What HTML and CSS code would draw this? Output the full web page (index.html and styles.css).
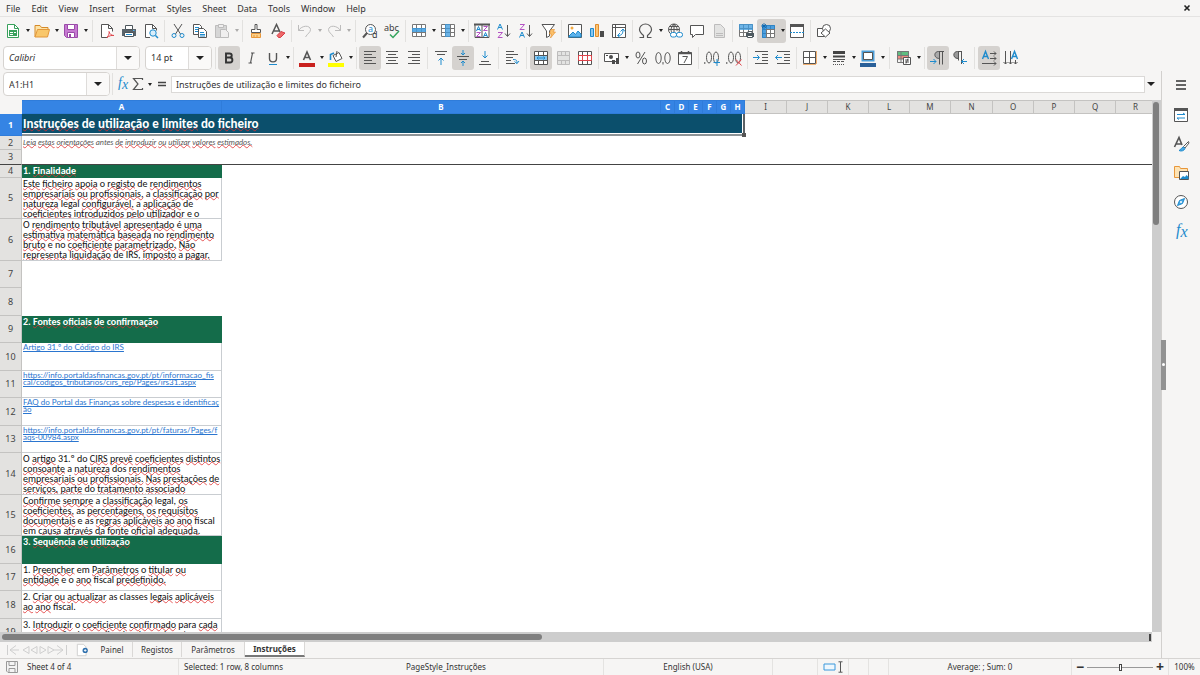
FILE: index.html
```html
<!DOCTYPE html>
<html lang="pt">
<head>
<meta charset="utf-8">
<title>Instruções</title>
<link rel="stylesheet" href="styles.css">
</head>
<body>
<div class="app">
<nav class="menubar" aria-label="Menu">
<button>File</button><button>Edit</button><button>View</button><button>Insert</button><button>Format</button><button>Styles</button><button>Sheet</button><button>Data</button><button>Tools</button><button>Window</button><button>Help</button>
<button class="close" aria-label="Close"><svg viewBox="0 0 8 8"><path d="M1.500 1.500L6.500 6.500M6.500 1.500L1.500 6.500" stroke="#222" stroke-width="1.600"/></svg></button>
</nav>

<div class="toolbar" role="toolbar" aria-label="Standard">
<button class="tb" aria-label="New"><svg viewBox="0 0 16 16"><path class="g" d="M2.500 1.500h7l4 4v9h-11z" fill="#fff"/><path class="g" d="M9.500 1.500v4h4"/><path d="M4 7h8v6H4z" fill="#37a15b"/><path d="M5 9h3v1H5zM9 9h2v1H9zM5 11h3v1H5z" fill="#fff"/></svg></button><button class="dd" aria-label="New options"></button>
<button class="tb" aria-label="Open"><svg viewBox="0 0 16 16"><path d="M1 14V2.500h5l1.500 2H14V7" fill="#fde3a5" stroke="#d68a29"/><path d="M1 14L3.500 6.500h12L13.500 14z" fill="#f9c76b" stroke="#e2973b"/></svg></button><button class="dd" aria-label="Open options"></button>
<button class="tb" aria-label="Save"><svg viewBox="0 0 16 16"><path d="M1.500 1.500h13v13h-11l-2-2z" fill="#c679d1" stroke="#9a4aa8"/><path d="M4.500 1.500h7v5h-7zM4.500 9.500h7v5h-7z" fill="#fff" stroke="#9a4aa8"/><path d="M6 11h2v3H6z" fill="#9a4aa8"/></svg></button><button class="dd" aria-label="Save options"></button>
<i class="sep wide"></i>
<button class="tb" aria-label="Export PDF"><svg viewBox="0 0 16 16"><path class="k" d="M8.500 14.500h-6v-13h7l4 4v3" fill="#fff"/><path class="k" d="M9.500 1.500v4h4"/><path d="M8 14.500C10 12 10.500 10 10 8.500c1 3 2.500 4 5 4-2.500-.5-5 .5-7 2z" class="r"/></svg></button>
<button class="tb" aria-label="Print"><svg viewBox="0 0 16 16"><path d="M1 6h14v7H1z" fill="#59636a"/><path d="M4.500 2.500h7v4h-7zM3.500 9.500h9v4h-9z" fill="#fff" stroke="#4c555b"/><path d="M5 11.500h6" class="b"/><path d="M12 7.500h1.500" stroke="#4ab0ee"/></svg></button>
<button class="tb" aria-label="Print preview"><svg viewBox="0 0 16 16"><path class="k" d="M7 14.500H2.500v-13h7l4 4v2" fill="#fff"/><path class="k" d="M9.500 1.500v4h4"/><circle cx="10" cy="10" r="3.200" fill="#d9eefb" class="b"/><path class="b" d="M12.500 12.500l2.500 2.500" stroke-width="1.500"/></svg></button>
<i class="sep"></i>
<button class="tb" aria-label="Cut"><svg viewBox="0 0 16 16"><path class="k" d="M4 1l6.500 10M12 1L5.500 11"/><circle class="b" cx="4" cy="12.500" r="2"/><circle class="b" cx="12" cy="12.500" r="2"/></svg></button>
<button class="tb" aria-label="Copy"><svg viewBox="0 0 16 16"><path class="k" d="M1.500 1.500h6l2 2v8h-8z" fill="#fff"/><path class="b" d="M3 4.500h4M3 6.500h3M3 8.500h3"/><path class="k" d="M6.500 5.500h5l3 3v6h-8z" fill="#fff"/><path class="b" d="M8 9.500h4M8 11.500h5M8 13h5"/></svg></button>
<button class="tb off" aria-label="Paste"><svg viewBox="0 0 16 16"><path d="M1.500 2.500h11v12h-11z" fill="#ccc" stroke="#aaa"/><path d="M4.500 1.500h5v3h-5z" fill="#eee" stroke="#aaa"/><path d="M6.500 6.500h5l3 3v5h-8z" fill="#eee" stroke="#aaa"/></svg></button><button class="dd off" aria-label="Paste options"></button>
<i class="sep"></i>
<button class="tb" aria-label="Clone formatting"><svg viewBox="0 0 16 16"><path class="k" d="M7 1.500h2v5h3.500v3h-9v-3H7z" fill="#fff"/><path d="M3.500 10.500h9v4h-9z" fill="#fbd08a" stroke="#e8973a"/><path d="M6 12v2M9 12v2" stroke="#e8973a"/></svg></button>
<button class="tb" aria-label="Clear formatting"><svg viewBox="0 0 16 16"><path class="k" d="M2 11L6.500 1.500 10 9M4 8h5" stroke-width="1.500"/><path d="M7 12.500l4-4 4 1.500-4.500 4.500h-2z" fill="#ed6a6a" stroke="#d83b45"/></svg></button>
<i class="sep"></i>
<button class="tb off" aria-label="Undo"><svg viewBox="0 0 16 16"><path d="M1.500 2v5.500H7M1.500 7.500C5 2 13 2 13.500 6.500c0 3-3 4-5 7.500" class="m"/></svg></button><button class="dd off" aria-label="Undo options"></button>
<button class="tb off" aria-label="Redo"><svg viewBox="0 0 16 16"><path d="M14.500 2v5.500H9M14.500 7.500C11 2 3 2 2.500 6.500c0 3 3 4 5 7.500" class="m"/></svg></button><button class="dd off" aria-label="Redo options"></button>
<i class="sep wide"></i>
<button class="tb" aria-label="Find and replace"><svg viewBox="0 0 16 16"><circle class="k" cx="8.500" cy="6.500" r="5" fill="#fff"/><path class="k" d="M5 10l-4 4.500" stroke-width="2"/><text x="6" y="9" class="t9 fb">a</text><text x="10" y="15" class="t9 fk">d</text></svg></button>
<button class="tb" aria-label="Spelling"><svg viewBox="0 0 16 16"><text x="0" y="8" class="t9 fk">abc</text><path d="M6 11.500l3 3 6-6.500" fill="none" stroke="#35a55e" stroke-width="1.500"/></svg></button>
<i class="sep"></i>
<button class="tb" aria-label="Row"><svg viewBox="0 0 16 16"><path d="M1 1h14v13H1z" fill="#fff"/><path class="l" d="M1.500 1.500h13v12h-13zM1.500 5.500h13M1.500 9.500h13M5.500 1.500v12M10.500 1.500v12"/><path d="M1 5h14v4H1z" fill="#3c9bdf" opacity=".85"/></svg></button><button class="dd" aria-label="Row options"></button>
<button class="tb" aria-label="Column"><svg viewBox="0 0 16 16"><path d="M1 1h14v13H1z" fill="#fff"/><path class="l" d="M1.500 1.500h13v12h-13zM1.500 5.500h13M1.500 9.500h13M5.500 1.500v12M10.500 1.500v12"/><path d="M5 1h5v13H5z" fill="#3c9bdf" opacity=".75"/></svg></button><button class="dd" aria-label="Column options"></button>
<i class="sep"></i>
<button class="tb" aria-label="Sort"><svg viewBox="0 0 16 16"><path class="k" d="M1 1.500h14v13H1zM8 2v12" fill="#fff"/><path class="k" d="M0 1.500h16" stroke-width="2"/><path class="b" d="M2.500 8L4.500 3.500 6.500 8M3 6.500h3M9.500 14l2-4.500 2 4.500M10 12.500h3"/><path class="p" d="M2.500 9.500h4l-4 4h4M9.500 3.500h4l-4 4h4"/></svg></button>
<button class="tb" aria-label="Sort ascending"><svg viewBox="0 0 16 16"><path class="b" d="M1.500 6.500L4 1l2.500 5.500M2.500 4.500h3"/><path class="p" d="M2 9.500h4.500L2 14.500h4.500"/><path class="k" d="M11.500 2v11M9 10.500l2.500 3 2.500-3"/></svg></button>
<button class="tb" aria-label="Sort descending"><svg viewBox="0 0 16 16"><path class="p" d="M2 1.500h4.500L2 6.500h4.500"/><path class="b" d="M1.500 14.500L4 9l2.500 5.500M2.500 12.500h3"/><path class="k" d="M11.500 2v11M9 10.500l2.500 3 2.500-3"/></svg></button>
<button class="tb" aria-label="AutoFilter"><svg viewBox="0 0 16 16"><path class="k" d="M2 1.500h12.500L9.500 8v5l-3 1.500V8z" fill="#fff"/><path d="M11 6.500h3.500L13 9h2.500l-5 6 1-4H9.500z" fill="#fbc16b" stroke="#e8973a" stroke-width=".7"/></svg></button>
<i class="sep"></i>
<button class="tb" aria-label="Image"><svg viewBox="0 0 16 16"><path class="k" d="M1.500 1.500h13v13h-13z" fill="#fff"/><path d="M2 13l4-4 2.500 2.500L11 8l3 3v3H2z" fill="#5db3ed" stroke="#1e8bcd"/><circle cx="5" cy="5" r="1.500" fill="#f3aa43"/></svg></button>
<button class="tb" aria-label="Chart"><svg viewBox="0 0 16 16"><path d="M1.500 5.500h3v8h-3z" fill="#8ac6ef" stroke="#1e8bcd"/><path d="M6.500 1.500h3v12h-3z" fill="#fac577" stroke="#e18c2b"/><path d="M11 8h4v6h-4z" fill="#4b4b4b"/></svg></button>
<button class="tb" aria-label="Pivot table"><svg viewBox="0 0 16 16"><path class="k" d="M1.500 1.500h13v13h-13zM1.500 4.500h13M4.500 1.500v13" fill="#fff"/><path class="b" d="M7 12.500c4 0 5-2 5-6M9.500 8.500L12 6l2 2.500M9 10l-2.500 2.500L9 14.500"/></svg></button>
<i class="sep"></i>
<button class="tb" aria-label="Special character"><svg viewBox="0 0 16 16"><path class="k" d="M1.500 14.500h4v-2C2.500 10 1.500 8.500 1.500 6.500a6 5.500 0 0 1 12 0c0 2-1 3.500-4 6v2h4" stroke-width="1.200"/></svg></button><button class="dd" aria-label="Special character options"></button>
<button class="tb" aria-label="Hyperlink"><svg viewBox="0 0 16 16"><circle class="k" cx="7" cy="6.500" r="5.500"/><path class="k" d="M1.500 6.500h11M7 1v9M3 3.500h8M7 1c-4 4-3 7-2 9M7 1c4 4 3 6 3 7"/><rect x="3.500" y="9.500" width="6" height="4.500" rx="2" fill="#fff" class="b"/><rect x="9.500" y="9.500" width="6" height="4.500" rx="2" fill="#fff" class="b"/></svg></button>
<button class="tb" aria-label="Comment"><svg viewBox="0 0 16 16"><path class="k" d="M1.500 2.500h13v9h-8l-3 3v-3h-2z" fill="#fff"/></svg></button>
<button class="tb off" aria-label="Headers and footers"><svg viewBox="0 0 16 16"><path d="M3.500 1.500h6l4 4v9h-10z" fill="#ddd" stroke="#aaa"/><path d="M5 10.500h7M5 12.500h7" stroke="#aaa"/></svg></button>
<i class="sep"></i>
<button class="tb" aria-label="Print area"><svg viewBox="0 0 16 16"><path d="M1 1h14v13H1z" fill="#fff"/><path class="l" d="M1.500 1.500h13v12h-13zM1.500 5.500h13M1.500 9.500h13M5.500 1.500v12M10.500 1.500v12"/><path d="M1 1h14v6H1z" fill="#3c9bdf" opacity=".75"/><path d="M8 10h8v4H8z" fill="#4d5960"/><path d="M10 8.500h4v2h-4zM9.500 12.500h5v2h-5z" fill="#fff" stroke="#4d5960"/></svg></button>
<span class="split"><button class="tb" aria-label="Freeze"><svg viewBox="0 0 16 16"><path d="M2 2h13v13H2z" fill="#fff"/><path class="l" d="M2.500 2.500h12v12h-12zM6.500 3v11M10.500 3v11M2.500 6.500h12M2.500 10.500h12"/><path d="M2 2h13v4H6v9H2z" fill="#1e86d6" opacity=".8"/><path d="M4 0v6M1 3h6M2 1l4 4M6 1L2 5" stroke="#0b65ac" stroke-width=".8"/></svg></button><button class="dd" aria-label="Freeze options"></button></span>
<button class="tb" aria-label="Split window"><svg viewBox="0 0 16 16"><path class="k" d="M1.500 1.500h13v13h-13z" fill="#fff"/><path d="M1 1h14v3H1z" fill="#555"/><path class="b" d="M1 9.500h14" stroke-dasharray="2 1"/></svg></button>
<i class="sep"></i>
<button class="tb" aria-label="Draw functions"><svg viewBox="0 0 16 16"><path class="k" d="M1.500 5.500h7v8h-7z" fill="#fff"/><circle cx="10.500" cy="5.500" r="4" fill="#fff" class="k"/><path class="k" d="M9.500 6l4.500 4-4.500 4L5 10z" fill="#fff"/></svg></button>
</div>

<div class="toolbar format" role="toolbar" aria-label="Formatting">
<div class="combo font"><input class="it" aria-label="Font name" value="Calibri"><button aria-label="Font list"></button></div>
<div class="combo size"><input aria-label="Font size" value="14 pt"><button aria-label="Size list"></button></div>
<i class="sep"></i>
<button class="tb on" aria-label="Bold"><svg viewBox="0 0 16 16"><path d="M5 3.500h3.500c3 0 3 4 0 4H5zM5 7.500h4c3.200 0 3.200 5 0 5H5z" fill="none" stroke="#333" stroke-width="1.900"/></svg></button>
<button class="tb" aria-label="Italic"><svg viewBox="0 0 16 16"><path class="k" d="M9.500 3L7.500 13M8 3h3.500M5.500 13H9" stroke-width="1.200"/></svg></button>
<button class="tb" aria-label="Underline"><svg viewBox="0 0 16 16"><path class="k" d="M4.500 3v5.500c0 4.500 7 4.500 7 0V3" stroke-width="1.400"/><path class="b" d="M4 14.500h8"/></svg></button><button class="dd" aria-label="Underline options"></button>
<i class="sep"></i>
<button class="tb" aria-label="Font colour"><svg viewBox="0 0 16 16"><path class="k" d="M4.500 10L8 2l3.500 8M6 7.500h4.500" stroke-width="1.600"/><path d="M0 13h16v4H0z" fill="#c9211e"/></svg></button><button class="dd" aria-label="Font colour options"></button>
<button class="tb" aria-label="Highlighting"><svg viewBox="0 0 16 16"><path class="k" d="M5 5.500l6-3 3 6-6 3zM8 7l1-6" fill="#fff"/><path d="M2.500 10V4.500L6 3" fill="none" stroke="#1e8bcd" stroke-width="1.600"/><path d="M0 13h16v4H0z" fill="#ff0"/></svg></button><button class="dd" aria-label="Highlighting options"></button>
<i class="sep"></i>
<button class="tb on" aria-label="Align left"><svg viewBox="0 0 16 16"><path class="k" d="M2 1.500h12M2 4.500h8M2 7.500h12M2 10.500h8M2 13.500h12"/></svg></button>
<button class="tb" aria-label="Align centre"><svg viewBox="0 0 16 16"><path class="k" d="M2 1.500h12M4 4.500h8M2 7.500h12M4 10.500h8M2 13.500h12"/></svg></button>
<button class="tb" aria-label="Align right"><svg viewBox="0 0 16 16"><path class="k" d="M2 1.500h12M6 4.500h8M2 7.500h12M6 10.500h8M2 13.500h12"/></svg></button>
<i class="sep"></i>
<button class="tb" aria-label="Align top"><svg viewBox="0 0 16 16"><path class="k" d="M2 1.500h12M4 4.500h8"/><path class="b" d="M8 15V8M5.500 10.500L8 8l2.500 2.500"/></svg></button>
<button class="tb on" aria-label="Centre vertically"><svg viewBox="0 0 16 16"><path class="k" d="M2 6.500h12M4 9.500h8"/><path class="b" d="M8 0v5M6 3l2 2 2-2M8 16v-5M6 13l2-2 2 2"/></svg></button>
<button class="tb" aria-label="Align bottom"><svg viewBox="0 0 16 16"><path class="k" d="M2 14.500h12M4 11.500h8"/><path class="b" d="M8 1v7M5.500 5.500L8 8l2.500-2.500"/></svg></button>
<i class="sep"></i>
<button class="tb" aria-label="Wrap text"><svg viewBox="0 0 16 16"><path class="k" d="M2 1.500h8M2 4.500h12M2 7.500h7M2 10.500h5M2 13.500h9"/><path class="b" d="M9 9.500c4 0 4 1 4 4M10.500 11.500l2.500 2 2-2.500"/></svg></button>
<i class="sep wide"></i>
<button class="tb on" aria-label="Merge and centre"><svg viewBox="0 0 16 16"><path class="k" d="M1.500 1.500h13v13h-13zM1.500 5.500h13M1.500 10.500h13M5.500 1.500v4M10.500 1.500v4M5.500 10.500v4M10.500 10.500v4" fill="#fff"/><path d="M2 6h12v4H2z" fill="#86c7f3"/><path class="b" d="M4 8h8M5.500 6.500L4 8l1.500 1.500M10.500 6.500L12 8l-1.500 1.500"/></svg></button>
<button class="tb off" aria-label="Merge cells"><svg viewBox="0 0 16 16"><path d="M2.500 1.500h12v13h-12zM2.500 5.500h12M2.500 10.500h12M6.500 1.500v4M10.500 1.500v4M6.500 10.500v4M10.500 10.500v4" fill="#ddd" stroke="#aaa"/></svg></button>
<button class="tb" aria-label="Unmerge cells"><svg viewBox="0 0 16 16"><path class="k" d="M1.500 1.500h13v13h-13zM5.500 1.500v4M10.500 1.500v4M5.500 10.500v4M10.500 10.500v4" fill="#fff"/><path class="r" d="M1.500 5.500h13v5h-13zM5.500 5.500v5M10.500 5.500v5"/></svg></button>
<i class="sep"></i>
<button class="tb" aria-label="Currency"><svg viewBox="0 0 16 16"><path class="k" d="M.5 3.500h14v8H.5z" fill="#fff"/><circle cx="7" cy="7" r="2" fill="#4b4b4b"/><path d="M2 5h2v1H2zM8 10h3v4H8zM12 8h3v6h-3z" fill="#4b4b4b"/></svg></button><button class="dd" aria-label="Currency options"></button>
<button class="tb" aria-label="Percent"><svg viewBox="0 0 16 16"><ellipse class="k" cx="5" cy="5" rx="2" ry="3"/><ellipse class="k" cx="11.500" cy="11" rx="2" ry="3"/><path class="k" d="M12 2L4.500 14"/></svg></button>
<button class="tb" aria-label="Number"><svg viewBox="0 0 16 16"><ellipse class="k" cx="3.500" cy="8" rx="2.700" ry="5.500"/><ellipse class="k" cx="12.500" cy="8" rx="2.700" ry="5.500"/><path class="k" d="M8 12v2.500"/></svg></button>
<button class="tb" aria-label="Date"><svg viewBox="0 0 16 16"><path class="k" d="M1.500 2.500h13v12h-13z" fill="#fff"/><path class="k" d="M1 3.500h14M4.500 1v3M11.500 1v3" stroke-width="1.500"/><path class="k" d="M5.500 6.500h5L7 13"/></svg></button>
<i class="sep"></i>
<button class="tb" aria-label="Add decimal place"><svg viewBox="0 0 16 16"><path class="k" d="M.8 12v2"/><ellipse class="k" cx="5" cy="7.500" rx="2.500" ry="5.500"/><ellipse class="k" cx="12" cy="7.500" rx="2.500" ry="5.500"/><path class="b" d="M13 9v7M9.500 12.500h6.500"/></svg></button>
<button class="tb" aria-label="Delete decimal place"><svg viewBox="0 0 16 16"><path class="k" d="M.8 12v2"/><ellipse class="k" cx="5" cy="7.500" rx="2.500" ry="5.500"/><ellipse class="k" cx="12" cy="7.500" rx="2.500" ry="5.500"/><path class="r" d="M10 9.500l5.500 6M15.500 9.500l-5.500 6"/></svg></button>
<i class="sep"></i>
<button class="tb" aria-label="Increase indent"><svg viewBox="0 0 16 16"><path class="k" d="M2 1.500h13M9 4.500h6M9 7.500h6M9 10.500h6M2 13.500h13"/><path class="b" d="M0 7.500h6M4 5l2.500 2.500L4 10"/></svg></button>
<button class="tb" aria-label="Decrease indent"><svg viewBox="0 0 16 16"><path class="k" d="M2 1.500h13M9 4.500h6M9 7.500h6M9 10.500h6M2 13.500h13"/><path class="b" d="M7 7.500H.5M3 5L.5 7.500 3 10"/></svg></button>
<i class="sep"></i>
<button class="tb" aria-label="Borders"><svg viewBox="0 0 16 16"><path class="k" d="M1.500 1.500h12v12h-12zM7.500 1.500v12M1.500 7.500h12" fill="#fff"/><path d="M1 14.500h13M14.500 1v13" stroke="#f1b070"/></svg></button><button class="dd" aria-label="Borders options"></button>
<button class="tb" aria-label="Border style"><svg viewBox="0 0 16 16"><path d="M2 2.500h12" stroke="#444" stroke-width="3"/><path d="M2 6.500h12" stroke="#444" stroke-width="2"/><path class="k" d="M2 9.500h12"/><path class="k" d="M2 11.500h12" stroke-dasharray="3 1"/><path class="k" d="M2 14.500h12" stroke-dasharray="1 1"/></svg></button><button class="dd" aria-label="Border style options"></button>
<button class="tb" aria-label="Border colour"><svg viewBox="0 0 16 16"><path d="M2.500 1.500h11v9h-11z" fill="#fff" stroke="#4c9fda" stroke-width="2"/><path d="M3.500 2.500h9v7h-9z" class="k"/><path d="M0 13h16v4H0z" fill="#2a6099"/></svg></button><button class="dd" aria-label="Border colour options"></button>
<i class="sep wide"></i>
<button class="tb" aria-label="Conditional formatting"><svg viewBox="0 0 16 16"><path d="M1 1h12v4H1z" fill="#60bd80"/><path d="M1 5h12v4H1z" fill="#f08b80"/><path class="l" d="M1.500 1.500h11v11h-11zM1.500 5.500h11M1.500 9h11M5 1.500v11"/><path class="k" d="M7.500 7.500h7v7h-7z" fill="#fff"/><path class="k" d="M9 10h4M9 12h4M12 8.500l-2 5"/></svg></button><button class="dd" aria-label="Conditional options"></button>
<i class="sep"></i>
<button class="tb on" aria-label="Left to right"><svg viewBox="0 0 16 16"><path d="M9 1.500C3.500 1 3.500 9 9 8.500z" fill="#aaa"/><path class="k" d="M14 1.500H8.500C3.500 1.500 3.500 8.500 9.500 8.500M9.500 1.500v13M12.500 1.500v13"/><path class="b" d="M0 11.500h6M3.500 9L6 11.500 3.500 14"/></svg></button>
<button class="tb" aria-label="Right to left"><svg viewBox="0 0 16 16"><path d="M6 1.500C.5 1 .5 9 6 8.500z" fill="#999"/><path class="k" d="M10 1.500H5.500C.5 1.500.5 8.500 6 8.500M6.500 1.500v9M9.500 1.500V14"/><path class="b" d="M15 11.500H9.500M12 9l-2.500 2.500L12 14"/></svg></button>
<i class="sep wide"></i>
<button class="tb on" aria-label="Horizontal text"><svg viewBox="0 0 16 16"><path class="b" d="M1.500 9L4.500 1.500 7.500 9M2.500 6.500h4" stroke-width="1.400"/><path class="k" d="M9 3.500h6M13 1.500l2 2-2 2M9 8.500h6M13 6.500l2 2-2 2M1 13.500h14M13 11.500l2 2-2 2"/></svg></button>
<button class="tb" aria-label="Vertical text"><svg viewBox="0 0 16 16"><path class="b" d="M8.500 9l3-7.500 3 7.500M9.500 6.500h4" stroke-width="1.400"/><path class="k" d="M2.500 1v13M.5 12l2 2 2-2M7.500 1v13M5.500 12l2 2 2-2M12.500 10v4M10.500 12l2 2 2-2"/></svg></button>
</div>

<div class="work">
<main class="sheet">
<div class="formula">
<div class="combo name"><input aria-label="Name box" value="A1:H1"><button aria-label="Names"></button></div>
<i class="sep"></i>
<button class="fb16" aria-label="Function wizard"><svg viewBox="0 0 16 16"><text x="3" y="11" class="fx">f<tspan dy="2">x</tspan></text></svg></button>
<button class="fb16 sum" aria-label="Sum"><svg viewBox="0 0 16 16"><path class="k" d="M12.500 4V2.500h-9L8 8l-4.500 5.500h9V12" stroke-width="1.200"/></svg></button><button class="dd" aria-label="Function options"></button>
<button class="fb16 eq" aria-label="Formula"><svg viewBox="0 0 16 16"><path d="M3 6.500h8M3 9.500h8" stroke="#444" stroke-width="1.400"/></svg></button>
<input class="line" aria-label="Input line" value="Instruções de utilização e limites do ficheiro">
<button class="dd big" aria-label="Expand"></button>
</div>
<div class="gridwrap">
<div class="grid">
<table>
<colgroup><col class="ch"><col class="ca"><col class="cb"><col class="cs"><col class="cs"><col class="cs"><col class="cs"><col class="cs"><col class="cs"><col class="cw"><col class="cn"><col class="cn"><col class="cn"><col class="cn"><col class="cw"><col class="cn"><col class="cn"><col class="cn"><col></colgroup>
<thead><tr><th class="corner"></th><th class="sel">A</th><th class="sel">B</th><th class="sel">C</th><th class="sel">D</th><th class="sel">E</th><th class="sel">F</th><th class="sel">G</th><th class="sel">H</th><th>I</th><th>J</th><th>K</th><th>L</th><th>M</th><th>N</th><th>O</th><th>P</th><th>Q</th><th>R</th></tr></thead>
<tbody>
<tr class="h22"><th class="sel">1</th><td colspan="8" class="title"><div><s>Instruções</s> de <s>utilização</s> e <s>limites</s> do <s>ficheiro</s></div><span class="handle"></span></td><td colspan="10"></td></tr>
<tr class="h14"><th>2</th><td colspan="18" class="note"><div><s>Leia</s> <s>estas</s> <s>orientações</s> antes <s>de</s> <s>introduzir</s> <s>ou</s> <s>utilizar</s> <s>valores</s> <s>estimados.</s></div></td></tr>
<tr class="h15 frozen"><th>3</th><td colspan="18"></td></tr>
<tr class="h13"><th>4</th><td class="head"><div>1. <s>Finalidade</s></div></td><td colspan="17"></td></tr>
<tr class="h41"><th>5</th><td class="cell"><div><s>Este</s> <s>ficheiro</s> <s>apoia</s> o <s>registo</s> de <s>rendimentos</s><br><s>empresariais</s> <s>ou</s> <s>profissionais,</s> a <s>classificação</s> <s>por</s><br><s>natureza</s> legal <s>configurável,</s> a <s>aplicação</s> de<br><s>coeficientes</s> <s>introduzidos</s> <s>pelo</s> <s>utilizador</s> e o</div></td><td colspan="17"></td></tr>
<tr class="h42"><th>6</th><td class="cell"><div>O <s>rendimento</s> <s>tributável</s> <s>apresentado</s> é <s>uma</s><br><s>estimativa</s> <s>matemática</s> <s>baseada</s> no <s>rendimento</s><br><s>bruto</s> e no <s>coeficiente</s> <s>parametrizado.</s> <s>Não</s><br><s>representa</s> <s>liquidação</s> de IRS, <s>imposto</s> a <s>pagar,</s></div></td><td colspan="17"></td></tr>
<tr class="h27"><th>7</th><td colspan="18"></td></tr>
<tr class="h28"><th>8</th><td colspan="18"></td></tr>
<tr class="h27"><th>9</th><td class="head"><div>2. <s>Fontes</s> <s>oficiais</s> <s>de</s> <s>confirmação</s></div></td><td colspan="17"></td></tr>
<tr class="h28"><th>10</th><td class="cell link"><div><a href="#irs">Artigo 31.º do Código do IRS</a></div></td><td colspan="17"></td></tr>
<tr class="h27"><th>11</th><td class="cell link"><div><a href="#irs31">https://info.portaldasfinancas.gov.pt/pt/informacao_fis<br>cal/codigos_tributarios/cirs_rep/Pages/irs31.aspx</a></div></td><td colspan="17"></td></tr>
<tr class="h28"><th>12</th><td class="cell link"><div><a href="#faq">FAQ do Portal das Finanças sobre despesas e identificaç<br>ão</a></div></td><td colspan="17"></td></tr>
<tr class="h27"><th>13</th><td class="cell link"><div><a href="#faqs">https://info.portaldasfinancas.gov.pt/pt/faturas/Pages/f<br>aqs-00984.aspx</a></div></td><td colspan="17"></td></tr>
<tr class="h42"><th>14</th><td class="cell"><div>O <s>artigo</s> 31.º do <s>CIRS</s> <s>prevê</s> <s>coeficientes</s> <s>distintos</s><br><s>consoante</s> a <s>natureza</s> dos <s>rendimentos</s><br><s>empresariais</s> <s>ou</s> <s>profissionais.</s> <s>Nas</s> <s>prestações</s> <s>de</s><br><s>serviços,</s> <s>parte</s> do <s>tratamento</s> <s>associado</s></div></td><td colspan="17"></td></tr>
<tr class="h41"><th>15</th><td class="cell"><div><s>Confirme</s> <s>sempre</s> a <s>classificação</s> legal, <s>os</s><br><s>coeficientes,</s> as <s>percentagens,</s> <s>os</s> <s>requisitos</s><br><s>documentais</s> e as <s>regras</s> <s>aplicáveis</s> <s>ao</s> <s>ano</s> fiscal<br>em <s>causa</s> <s>através</s> <s>da</s> <s>fonte</s> <s>oficial</s> <s>adequada.</s></div></td><td colspan="17"></td></tr>
<tr class="h28"><th>16</th><td class="head"><div>3. <s>Sequência</s> <s>de</s> <s>utilização</s></div></td><td colspan="17"></td></tr>
<tr class="h27"><th>17</th><td class="cell"><div>1. <s>Preencher</s> em <s>Parâmetros</s> o <s>titular</s> <s>ou</s><br><s>entidade</s> e o <s>ano</s> fiscal <s>predefinido.</s></div></td><td colspan="17"></td></tr>
<tr class="h28"><th>18</th><td class="cell"><div>2. <s>Criar</s> <s>ou</s> <s>actualizar</s> as classes <s>legais</s> <s>aplicáveis</s><br><s>ao</s> <s>ano</s> fiscal.</div></td><td colspan="17"></td></tr>
<tr class="h27"><th>19</th><td class="cell"><div>3. <s>Introduzir</s> o <s>coeficiente</s> <s>confirmado</s> para <s>cada</s><br><s>combinação</s> de <s>ano</s> fiscal e <s>classe</s> de <s>natureza.</s></div></td><td colspan="17"></td></tr>
</tbody>
</table>
</div>
<div class="vscroll"><div class="vthumb"></div></div>
</div>
<div class="hscroll"><div class="hthumb"></div><i class="hend"></i></div>
<div class="tabs">
<svg class="navs" viewBox="0 0 62 12"><path d="M1.500 1v10M10 1.500L4 6l6 4.500M4 6h9M23 2.500L17 6l6 3.500zM31 2.500L25 6l6 3.500zM34 2.500L40 6l-6 3.500zM42 2.500L48 6l-6 3.500zM51 1.500L57 6l-6 4.500M48 6h9M60.500 1v10" fill="none" stroke="#cfcfcf"/></svg>
<button class="add" aria-label="Add sheet"><svg viewBox="0 0 16 16"><path d="M1.500 1.500h7l3 3v10h-10z" fill="#fff" stroke="#ccc"/><circle cx="10.500" cy="8.500" r="3" fill="#2d6fad"/><path d="M9 8.500h3M10.500 7v3" stroke="#fff"/></svg></button>
<button class="tab t1">Painel</button><button class="tab t2">Registos</button><button class="tab t3">Parâmetros</button><button class="tab cur">Instruções</button>
</div>
</main>
<aside class="side">
<span class="grip"></span>
<button aria-label="Settings"><svg viewBox="0 0 16 16"><path d="M3 4h10M3 8h10M3 12h10" stroke="#333" stroke-width="1.500"/></svg></button>
<button aria-label="Properties"><svg viewBox="0 0 16 16"><path class="k" d="M1.500 2.500h13v12h-13z" fill="#fff"/><path d="M1 1h14v3H1z" fill="#555"/><path class="b" d="M4 7.500h8M10 6l2 1.500M12 11H4M6 12.500L4 11"/></svg></button>
<button aria-label="Styles"><svg viewBox="0 0 16 16"><path class="k" d="M1.500 11L6 1.500 9 9M3 8h5.500" stroke-width="1.600"/><path class="k" d="M15.500 5.500l-5 5 1.500 1.500 4-5z" fill="#fff"/><path d="M10.500 11l1.500 1.500C11 15 8 15.500 6 14.500c2-.5 2-3 4.500-3.500z" fill="#4ba8e4" stroke="#1e8bcd"/></svg></button>
<button aria-label="Gallery"><svg viewBox="0 0 16 16"><path d="M1.500 12.500v-11h5l1 2h7v9z" fill="#fde3b5" stroke="#e8973a"/><path d="M6.500 6.500h9v8h-9z" fill="#fff" class="k"/><path d="M7 14l3-3 2 1 1.500-2 2 2v2z" fill="#1e8bcd"/></svg></button>
<button aria-label="Navigator"><svg viewBox="0 0 16 16"><circle cx="8" cy="8" r="6.500" fill="#fff" class="k"/><path d="M11.500 4.500L9.500 9.500l-5 2 2-5z" fill="#4ba8e4" class="b"/><circle cx="8" cy="8" r="1" fill="#fff"/></svg></button>
<button aria-label="Functions"><svg viewBox="0 0 16 16"><text x="3" y="12" class="fx fxl">f<tspan dy="2">x</tspan></text></svg></button>
</aside>
</div>

<footer class="status">
<span class="s0"><svg viewBox="0 0 12 12"><path d="M.5 .5h11v11H2l-1.500-1.500zM3 .5h6v4H3zM3 7.500h6v4H3z" fill="#f4f4f4" stroke="#999"/></svg>Sheet 4 of 4</span>
<span class="s1">Selected: 1 row, 8 columns</span>
<span class="s2">PageStyle_Instruções</span>
<span class="s3">English (USA)</span>
<span class="s4"></span>
<span class="s5"><svg viewBox="0 0 20 12"><path d="M1 3h11v6H1z" fill="#eef7fd" stroke="#3b98dc"/><path class="k" d="M17.500 1v10M15.500 .8h4M15.500 11.200h4"/></svg></span>
<span class="s6"></span><span class="s6"></span>
<span class="s7">Average: ; Sum: 0</span>
<span class="s8"><button aria-label="Zoom out">−</button><input type="range" aria-label="Zoom" min="0" max="100" value="50"><button aria-label="Zoom in">+</button></span>
<span class="s9">100%</span>
</footer>
</div>
</body>
</html>
```
FILE: styles.css
```css
* { box-sizing: border-box; }
body { margin: 0; font-family: "Noto Sans", sans-serif; font-size: 9px; color: #333; background: #f6f5f4; }
button { font: inherit; color: inherit; border: 0; background: none; padding: 0; margin: 0; }
input { font: inherit; color: inherit; border: 0; min-width: 0; margin: 0; }
.app { display: flex; flex-direction: column; height: 100vh; overflow: hidden; }

.menubar { display: flex; flex: none; align-items: center; gap: 11px; height: 17px; padding: 0 5px 0 6px; border-bottom: 1px solid #e4e3e2; }
.close { margin-left: auto; width: 12px; height: 12px; }
.close svg { width: 8px; height: 8px; }

.toolbar { display: flex; flex: none; align-items: center; height: 27px; padding-left: 2px; }
.toolbar.format { padding-left: 3px; }
.tb { display: flex; align-items: center; justify-content: center; flex: none; width: 22px; height: 24px; border-radius: 3px; }
.tb svg { width: 16px; height: 16px; overflow: visible; }
.on, .split { background: #d5d2cf; }
.split { display: flex; border-radius: 3px; align-items: center; }
.off { opacity: .75; }
.dd { flex: none; width: 7px; height: 24px; display: flex; align-items: center; justify-content: center; }
.dd::before, .combo button::before { content: ""; border: 2px solid transparent; border-top: 3px solid #222; border-bottom: 0; }
.dd.off { opacity: .35; }
.dd.big::before, .combo button::before { border-width: 4px 4px 0; }
.sep { flex: none; width: 1px; height: 22px; margin: 0 2px; background: #e2e1df; }
.sep.wide { margin: 0 3px; }

svg { display: block; }
.k { stroke: #555; }
.l { stroke: #777; }
.b { stroke: #1e8bcd; }
.p { stroke: #b453c4; }
.r { stroke: #e0454c; }
.g { stroke: #37a15b; }
.m { stroke: #aaa; }
path.k:not([fill]), path.b:not([fill]), path.p, path.r, path.m, path.l, path.g:not([fill]), circle:not([fill]), ellipse { fill: none; }
.t9 { font-size: 9px; font-family: "Noto Sans", sans-serif; }
.fb { fill: #1e8bcd; }
.fk { fill: #3c3c3c; }
.fx { font: italic 14px "Liberation Serif", serif; fill: #1e8bcd; }
.fxl { font-size: 16px; }

.combo { display: flex; flex: none; height: 24px; background: #fff; border: 1px solid #d6d3d0; border-radius: 4px; overflow: hidden; }
.combo input { flex: 1; padding: 0 5px; background: none; }
.combo button { flex: none; width: 23px; display: flex; align-items: center; justify-content: center; background: #faf9f8; border-left: 1px solid #dedcda; }
.font { width: 137px; margin-right: 5px; }
.size { width: 67px; margin-right: 1px; }
.name { width: 107px; }
.it { font-style: italic; }

.work { display: flex; flex: 1; min-height: 0; }
.sheet { display: flex; flex-direction: column; flex: 1; min-width: 0; }
.formula { display: flex; flex: none; align-items: center; height: 29px; padding: 0 5px 3px 3px; }
.formula .sep { margin: 0 2px; }
.fb16 { flex: none; width: 16px; }
.fb16 svg { width: 16px; height: 16px; }
.sum { margin-left: -1px; }
.formula .dd { width: 8px; }
.eq { margin: 0 0 0 1px; }
.line { flex: 1; height: 17px; background: #fff; border: 1px solid #dbd9d7; padding: 0 4px; }
.formula .big { width: 11px; }

.gridwrap { display: flex; flex: 1; min-height: 0; }
.grid { flex: 1; min-width: 0; overflow: hidden; background: #fff; }
table { width: calc(100% + 4px); table-layout: fixed; border-collapse: separate; border-spacing: 0; }
.ch { width: 22px; } .ca { width: 200px; } .cb { width: 439px; } .cs { width: 14px; } .cn { width: 41px; } .cw { width: 42px; }
th, td { padding: 0; }
th { font-weight: 400; font-size: 8px; line-height: 12px; background: #e3e2e0; border-right: 1px solid #c4c3c1; border-bottom: 1px solid #c4c3c1; color: #444; }
thead th { height: 14px; border-top: 1px solid #c4c3c1; }
tbody th { font-size: 9px; }
th.sel { background: #3584e4; border-color: #2f7cda; color: #fff; font-weight: 700; }
th.corner { background: #f6f5f4; border-color: #f6f5f4; }
td div { overflow: hidden; white-space: nowrap; padding-left: 1px; }
.h13 { height: 13px; } .h14 { height: 14px; } .h15 { height: 15px; } .h22 { height: 22px; } .h27 { height: 27px; } .h28 { height: 28px; } .h41 { height: 41px; } .h42 { height: 42px; }
.h13 div { height: 13px; } .h14 div { height: 13px; } .h22 div { height: 20px; } .h27 div { height: 26px; } .h28 div { height: 27px; } .h41 div { height: 40px; } .h42 div { height: 41px; }
td { vertical-align: top; font-family: Carlito, Lato, sans-serif; }
s { text-decoration: underline wavy #e0302fcc 1px; text-underline-offset: -1px; text-decoration-skip-ink: none; }
.title { position: relative; background: #0b4f6c; color: #fff; font-size: 13px; font-weight: 700; line-height: 20px; border-right: 2px solid #5c6266; border-bottom: 2px solid #8d9396; box-shadow: inset -1px -1px #fff; }
.handle { position: absolute; right: -3px; bottom: -3px; width: 4px; height: 4px; background: #555; }
.note { color: #555; font-size: 8px; font-style: italic; line-height: 12px; }
.frozen td, .frozen th { border-bottom: 1px solid #444; }
.head { background: #146c4a; color: #fff; font-size: 10px; font-weight: 700; line-height: 12px; }
.cell { color: #111; font-size: 10px; line-height: 10px; border-right: 1px solid #c9cdd1; border-bottom: 1px solid #c9cdd1; }
.cell div { padding-top: 1px; }
.link { font-family: Lato, sans-serif; font-size: 8px; line-height: 7px; }
a { color: #2a75cf; text-decoration: underline; text-decoration-skip-ink: none; }

.vscroll { flex: none; width: 9px; background: #cdcdcd; padding: 2px 2px 0 1px; }
.vthumb { height: 123px; border-radius: 3px; background: #7f7f7f; }
.hscroll { display: flex; flex: none; align-items: center; height: 10px; margin-right: 9px; padding: 0 1px 0 2px; background: #cdcdcd; }
.hthumb { width: 47%; height: 6px; border-radius: 3px; background: #7f7f7f; }
.hend { width: 2px; height: 7px; margin-left: auto; background: #444; }
.tabs { display: flex; flex: none; align-items: flex-start; height: 16px; padding-left: 6px; font-size: 8px; }
.navs { width: 62px; height: 12px; margin-top: 2px; }
.add { width: 16px; margin: 1px 0 0 8px; }
.add svg { width: 14px; height: 14px; }
.tab { height: 15px; border-right: 1px solid #dad8d6; }
.t1 { width: 41px; } .t2 { width: 49px; } .t3 { width: 63px; }
.cur { width: 60px; background: #fff; font-weight: 700; border-bottom: 2px solid #777; }

.side { position: relative; display: flex; flex: none; flex-direction: column; align-items: center; width: 39px; border-left: 1px solid #d2d0ce; padding-top: 6px; gap: 13px; }
.side button { width: 16px; height: 16px; }
.side button:nth-of-type(1) { margin-bottom: 1px; }
.side svg { width: 16px; height: 16px; overflow: visible; }
.grip { position: absolute; left: -1px; top: 50%; width: 5px; height: 50px; margin-top: -25px; background: #929292; }
.grip::after { content: ""; display: block; width: 3px; height: 3px; margin: 23px 1px; border-radius: 2px; background: #fff; }

.status { display: flex; flex: none; height: 17px; border-top: 1px solid #d6d4d2; line-height: 16px; font-size: 8px; }
.status span { display: flex; align-items: center; justify-content: center; border-right: 1px solid #e4e3e1; white-space: nowrap; }
.status .s0 { width: 179px; justify-content: flex-start; gap: 9px; padding-left: 6px; }
.s0 svg { width: 12px; height: 12px; }
.status .s1 { width: 222px; justify-content: flex-start; padding-left: 5px; border: 0; }
.status .s2 { width: 203px; justify-content: flex-start; padding-left: 5px; }
.s3 { width: 169px; } .s4 { width: 45px; } .s5 { width: 31px; } .s6 { width: 20px; }
.s5 svg { width: 20px; height: 12px; }
.s7 { flex: 1; }
.status .s8 { width: 97px; gap: 2px; }
.s8 button { width: 10px; font-size: 14px; font-weight: 700; }
.s8 input { width: 66px; height: 10px; appearance: none; background: none; }
.s8 input::-webkit-slider-runnable-track { height: 1px; background: #999; }
.s8 input::-webkit-slider-thumb { appearance: none; width: 3px; height: 7px; margin-top: -3px; background: #fff; border: 1px solid #444; }
.status .s9 { width: 31px; border: 0; }
```
